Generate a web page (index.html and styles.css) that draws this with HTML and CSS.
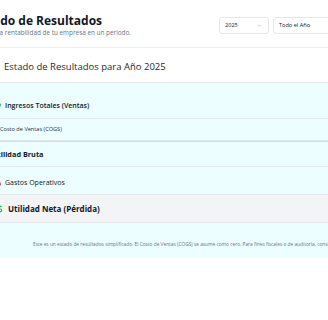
FILE: index.html
```
<!DOCTYPE html>
<html lang="es">
 <head>
  <meta charset="utf-8">
  <title>Estado de Resultados</title>
  <link rel="stylesheet" href="styles.css">
 </head>
 <body>
  <div class="page">
   <div class="header">
    <div class="heading">
     <h1>Estado de Resultados</h1>
     <p>Analiza la rentabilidad de tu empresa en un periodo.</p>
    </div>
    <div class="filters">
     <div class="select year">
      <span>2025</span>
      <svg width="5" height="5" viewBox="0 0 10 10"><path d="M2 3.5 L5 6.5 L8 3.5" fill="none" stroke="#9ca3af" stroke-width="1.2"/></svg>
     </div>
     <div class="select period">
      <span>Todo el Año</span>
      <svg width="5" height="5" viewBox="0 0 10 10"><path d="M2 3.5 L5 6.5 L8 3.5" fill="none" stroke="#9ca3af" stroke-width="1.2"/></svg>
     </div>
    </div>
   </div>

   <div class="card">
    <div class="card-title">Estado de Resultados para Año 2025</div>
    <div class="statement">
     <div class="row income">
      <svg class="icon" width="8" height="8" viewBox="0 0 24 24"><path d="M2 18 L9 11 L13 15 L22 6 M16 6 H22 V12" fill="none" stroke="#22c55e" stroke-width="3" stroke-linecap="round" stroke-linejoin="round"/></svg>
      <span>Ingresos Totales (Ventas)</span>
     </div>
     <div class="row cogs">Costo de Ventas (COGS)</div>
     <div class="row gross">Utilidad Bruta</div>
     <div class="row expenses">
      <svg class="icon" width="8" height="8" viewBox="0 0 24 24"><path d="M2 6 L9 13 L13 9 L22 18 M16 18 H22 V12" fill="none" stroke="#ef4444" stroke-width="3" stroke-linecap="round" stroke-linejoin="round"/></svg>
      <span>Gastos Operativos</span>
     </div>
     <div class="row net">
      <svg class="icon" width="9" height="10" viewBox="0 0 24 24"><path d="M12 2 V22 M17 5 H9.5 a3.5 3.5 0 0 0 0 7 h5 a3.5 3.5 0 0 1 0 7 H6" fill="none" stroke="#22c55e" stroke-width="3" stroke-linecap="round" stroke-linejoin="round"/></svg>
      <span>Utilidad Neta (Pérdida)</span>
     </div>
     <div class="note">Este es un estado de resultados simplificado. El Costo de Ventas (COGS) se asume como cero. Para fines fiscales o de auditoría, consulte a un profesional.</div>
    </div>
   </div>
  </div>
 </body>
</html>
```

FILE: styles.css
```
body {
 margin:      0;
 background:  #ffffff;
 font-family: "Open Sans", "Noto Sans", sans-serif;
 color:       #111827;
 overflow:    hidden;
}

.page {
 width:       458px;
 margin-left: -25px;
}

.header {
 display:         flex;
 justify-content: space-between;
 align-items:     center;
 padding:         13px 90px 10px 0;
 border-bottom:   1px solid #eef0f4;
}

.heading h1 {
 margin:      0;
 font-size:   12px;
 line-height: 16px;
 font-weight: 700;
 color:       #111827;
}

.heading p {
 margin:      0;
 font-size:   6.4px;
 line-height: 8px;
 color:       #6b7280;
}

.filters {
 display: flex;
 gap:     4px;
}

.select {
 display:         flex;
 align-items:     center;
 justify-content: space-between;
 box-sizing:      border-box;
 height:          17px;
 padding:         0 6px 0 5px;
 border:          1px solid #e5e7eb;
 border-radius:   3px;
 font-size:       5.6px;
 color:           #111827;
}

.select.year   { width: 50px; }
.select.period { width: 70px; }

.card {
 margin-top:    4px;
 background:    #ffffff;
 border-radius: 6px;
 box-shadow:    0 6px 10px -2px rgba(0, 0, 0, 0.16), 0 2px 4px rgba(0, 0, 0, 0.05);
 overflow:      hidden;
}

.card-title {
 padding:     8px 0 8px 29px;
 font-size:   9.5px;
 line-height: 14px;
 color:       #1f2937;
}

.statement {
 background: #ecfeff;
 border-top: 1px solid #e5e7eb;
}

.row {
 display:       flex;
 align-items:   center;
 gap:           4px;
 padding-left:  18px;
 border-bottom: 1px solid #e3e8ec;
}

.row.income {
 padding-top:    17px;
 padding-bottom: 6px;
 font-size:      7px;
 line-height:    12px;
 font-weight:    600;
}

.row.cogs {
 padding:     6px 0 6px 25px;
 font-size:   5.6px;
 line-height: 9px;
 color:       #1f2937;
}

.row.gross {
 border-top:     1px solid #d9dee4;
 padding-top:    6px;
 padding-bottom: 6px;
 padding-left:   17px;
 font-size:      7.3px;
 line-height:    12px;
 font-weight:    700;
}

.row.expenses {
 padding-top:    10px;
 padding-bottom: 5px;
 font-size:      7px;
 line-height:    12px;
 font-weight:    500;
}

.row.net {
 background:     #f3f4f6;
 padding-top:    7px;
 padding-bottom: 7px;
 padding-left:   20px;
 font-size:      8px;
 line-height:    13px;
 font-weight:    700;
}

.icon {
 flex-shrink: 0;
}

.note {
 padding:     18px 0 10px;
 text-align:  center;
 white-space: nowrap;
 font-size:   4.8px;
 line-height: 7px;
 color:       #6b7280;
}
```
